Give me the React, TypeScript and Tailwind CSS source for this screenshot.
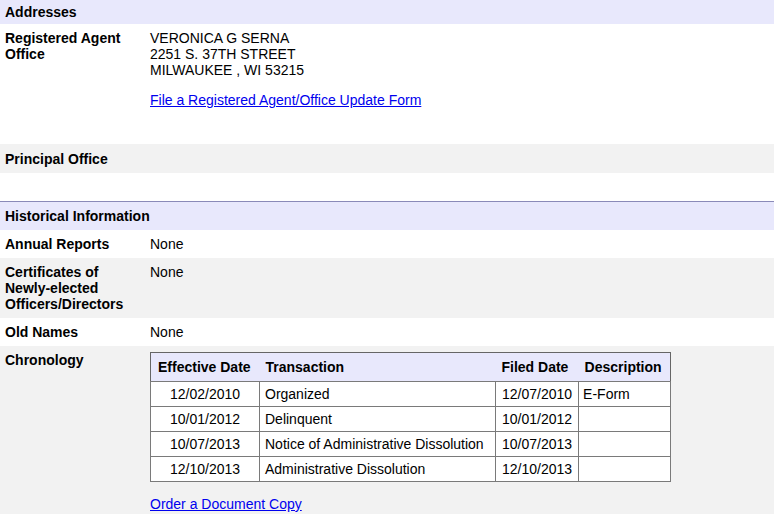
import React from 'react';

const rows = [
  { eff: '12/02/2010', tx: 'Organized', filed: '12/07/2010', desc: 'E-Form' },
  { eff: '10/01/2012', tx: 'Delinquent', filed: '10/01/2012', desc: '' },
  { eff: '10/07/2013', tx: 'Notice of Administrative Dissolution', filed: '10/07/2013', desc: '' },
  { eff: '12/10/2013', tx: 'Administrative Dissolution', filed: '12/10/2013', desc: '' },
];

const Row = ({ label, gray, children, className = '' }: { label: React.ReactNode; gray?: boolean; children?: React.ReactNode; className?: string }) => (
  <div className={`flex ${gray ? 'bg-[#f2f2f2]' : 'bg-white'} ${className}`}>
    <div className="w-[150px] shrink-0 pl-[5px] pr-2 font-bold">{label}</div>
    <div className="flex-1">{children}</div>
  </div>
);

const Header = ({ children, className = '' }: { children: React.ReactNode; className?: string }) => (
  <div className={`bg-[#e8e8fc] pl-[5px] font-bold flex items-center ${className}`}>{children}</div>
);

export default function App() {
  return (
    <div
      className="w-[774px] h-[514px] overflow-hidden bg-white text-[14px] leading-[16px] text-black"
      style={{ fontFamily: '"Liberation Sans", Arial, sans-serif' }}
    >
      <Header className="h-[24px]">Addresses</Header>
      <Row label={<>Registered Agent<br />Office</>} className="pt-[6px] h-[120px]">
        <div>VERONICA G SERNA</div>
        <div>2251 S. 37TH STREET</div>
        <div>MILWAUKEE , WI 53215</div>
        <a href="#" className="block mt-[14px] text-[#0000ee] underline">File a Registered Agent/Office Update Form</a>
      </Row>
      <Row label="Principal Office" gray className="pt-[7px] h-[29px]" />
      <div className="h-[29px] bg-white border-b border-[#8a8ab8]" />
      <Header className="h-[28px]">Historical Information</Header>
      <Row label="Annual Reports" className="py-[6px]">None</Row>
      <Row label={<>Certificates of<br />Newly-elected<br />Officers/Directors</>} gray className="py-[6px]">None</Row>
      <Row label="Old Names" className="py-[6px]">None</Row>
      <Row label="Chronology" gray className="pt-[6px] h-[200px]">
        <table className="border-collapse border border-[#666]">
          <thead>
            <tr className="bg-[#e8e8fc] font-bold text-left">
              <th className="w-[109px] px-[7px] py-[6px] whitespace-nowrap">Effective Date</th>
              <th className="w-[236px] px-[6px] py-[6px]">Transaction</th>
              <th className="w-[83px] px-[6px] py-[6px] whitespace-nowrap">Filed Date</th>
              <th className="w-[92px] px-[6px] py-[6px]">Description</th>
            </tr>
          </thead>
          <tbody>
            {rows.map((r) => (
              <tr key={r.eff + r.tx} className="bg-white">
                <td className="border border-[#7a7a7a] px-[5px] py-[4px] text-center">{r.eff}</td>
                <td className="border border-[#7a7a7a] px-[5px] py-[4px] whitespace-nowrap">{r.tx}</td>
                <td className="border border-[#7a7a7a] px-[6px] py-[4px]">{r.filed}</td>
                <td className="border border-[#7a7a7a] px-[4px] py-[4px]">{r.desc}</td>
              </tr>
            ))}
          </tbody>
        </table>
        <a href="#" className="block mt-[14px] text-[#0000ee] underline">Order a Document Copy</a>
      </Row>
    </div>
  );
}
